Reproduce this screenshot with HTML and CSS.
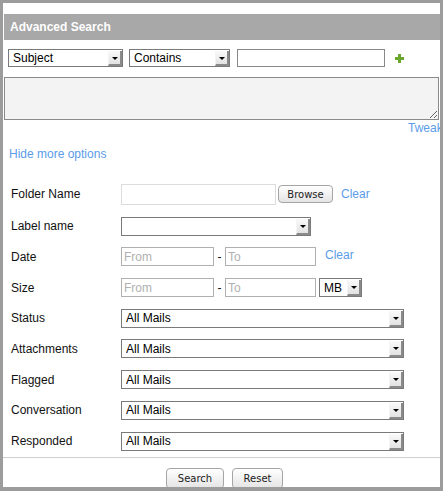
FILE: index.html
```html
<!DOCTYPE html>
<html lang="en">
<head>
    <meta charset="UTF-8">
    <meta name="viewport" content="width=device-width, initial-scale=1.0">
    <title>Advanced Search</title>
    <link rel="stylesheet" href="styles.css">
</head>
<body>
    <div class="panel">
        <div class="title">Advanced Search</div>

        <!-- Query row -->
        <div class="query">
            <span class="sel sel-field">
                <select><option>Subject</option></select>
                <span class="arrow"></span>
            </span>
            <span class="sel sel-op">
                <select><option>Contains</option></select>
                <span class="arrow"></span>
            </span>
            <input type="text" class="query-text">
            <svg class="plus" width="9" height="9" viewBox="0 0 9 9">
                <rect x="3" y="0" width="3" height="9" fill="#6aa72e"/>
                <rect x="0" y="3" width="9" height="3" fill="#6aa72e"/>
            </svg>
        </div>

        <textarea class="query-box"></textarea>
        <div class="tweak"><a href="#">Tweak</a></div>
        <div class="more"><a href="#">Hide more options</a></div>

        <!-- More options -->
        <div class="options">
            <label>Folder Name</label>
            <div class="ctrl">
                <input type="text" class="folder">
                <button class="btn btn-browse">Browse</button>
                <a href="#" class="clear">Clear</a>
            </div>

            <label>Label name</label>
            <div class="ctrl">
                <span class="sel sel-label">
                    <select><option></option></select>
                    <span class="arrow"></span>
                </span>
            </div>

            <label>Date</label>
            <div class="ctrl">
                <input type="text" class="range" placeholder="From">
                <span class="dash">-</span>
                <input type="text" class="range range-to" placeholder="To">
                <a href="#" class="clear clear-date">Clear</a>
            </div>

            <label>Size</label>
            <div class="ctrl">
                <input type="text" class="range" placeholder="From">
                <span class="dash">-</span>
                <input type="text" class="range range-to" placeholder="To">
                <span class="sel sel-unit">
                    <select><option>MB</option></select>
                    <span class="arrow"></span>
                </span>
            </div>

            <label>Status</label>
            <div class="ctrl">
                <span class="sel sel-wide"><select><option>All Mails</option></select><span class="arrow"></span></span>
            </div>

            <label>Attachments</label>
            <div class="ctrl">
                <span class="sel sel-wide"><select><option>All Mails</option></select><span class="arrow"></span></span>
            </div>

            <label>Flagged</label>
            <div class="ctrl">
                <span class="sel sel-wide"><select><option>All Mails</option></select><span class="arrow"></span></span>
            </div>

            <label>Conversation</label>
            <div class="ctrl">
                <span class="sel sel-wide"><select><option>All Mails</option></select><span class="arrow"></span></span>
            </div>

            <label>Responded</label>
            <div class="ctrl">
                <span class="sel sel-wide"><select><option>All Mails</option></select><span class="arrow"></span></span>
            </div>
        </div>

        <div class="actions">
            <button class="btn btn-search">Search</button>
            <button class="btn btn-reset">Reset</button>
        </div>
    </div>
</body>
</html>
```

FILE: styles.css
```css
* {
    box-sizing: border-box;
}

body {
    margin: 0;
    background: #9c9c9c;
    font-family: "Liberation Sans", Arial, sans-serif;
    font-size: 12px;
    color: #111;
}

a {
    color: #5b9ce8;
    text-decoration: none;
}

.panel {
    margin: 3px;
    height: 484px;
    background: #fff;
    overflow: hidden;
    padding-top: 11px;
}

.title {
    margin-left: 1px;
    height: 26px;
    line-height: 26px;
    padding-left: 6px;
    background: #a8a8a8;
    color: #fff;
    font-weight: bold;
    font-size: 12px;
}

/* Query row */
.query {
    display: flex;
    align-items: center;
    margin-top: 9px;
    padding-left: 5px;
    height: 18px;
}

.sel {
    position: relative;
    display: inline-block;
    height: 19px;
}

.sel select {
    appearance: none;
    -webkit-appearance: none;
    display: block;
    width: 100%;
    height: 100%;
    margin: 0;
    padding: 0 0 0 4px;
    border: 1px solid #7a7a7a;
    border-radius: 0;
    background: #fff;
    color: #000;
    font-family: "Liberation Sans", Arial, sans-serif;
    font-size: 12px;
}

.sel .arrow {
    position: absolute;
    right: 1px;
    top: 2px;
    bottom: 1px;
    width: 14px;
    background: linear-gradient(#fafafa, #e2e2e2);
    border-left: 1px solid #f4f4f4;
    border-right: 2px solid #8a8a8a;
    border-bottom: 2px solid #8a8a8a;
}

.sel .arrow::after {
    content: "";
    position: absolute;
    left: 3px;
    top: 6px;
    border-left: 3px solid transparent;
    border-right: 3px solid transparent;
    border-top: 3px solid #000;
}

.sel-field { width: 115px; height: 18px; }
.sel-op { width: 101px; height: 18px; margin-left: 6px; }
.sel-label { width: 190px; }
.sel-unit { width: 43px; margin-left: 3px; }
.sel-wide { width: 283px; }

.query-text {
    width: 148px;
    height: 18px;
    margin: 0 0 0 7px;
    border: 1px solid #888;
    padding: 0 3px;
}

.plus {
    margin-left: 10px;
}

.query-box {
    display: block;
    width: 435px;
    height: 43px;
    margin: 10px 1px 0 1px;
    border: 1px solid #8a8a8a;
    background: #f3f3f3;
    font-family: "Liberation Sans", Arial, sans-serif;
}

.tweak {
    margin-top: 1px;
    line-height: 14px;
    padding-left: 405px;
    white-space: nowrap;
}

.more {
    margin-top: 12px;
    line-height: 14px;
    padding-left: 6px;
}

/* More options */
.options {
    display: grid;
    grid-template-columns: 110px auto;
    grid-template-rows: 22px;
    grid-auto-rows: 19px;
    row-gap: 11.7px;
    align-items: center;
    margin-top: 22px;
    padding-left: 8px;
}

.options label {
    color: #111;
}

.ctrl {
    display: flex;
    align-items: center;
    height: 100%;
}

.folder {
    width: 155px;
    height: 21px;
    margin: 0;
    border: 1px solid #dcdcdc;
}

input {
    font-family: "Liberation Sans", Arial, sans-serif;
    font-size: 12px;
    outline: none;
}

.range {
    width: 93px;
    height: 19px;
    margin: 0;
    padding: 0 2px;
    border: 1px solid #b0b0b0;
}

.range::placeholder {
    color: #b0b0b0;
}

.range-to {
    width: 91px;
}

.dash {
    width: 11px;
    text-align: center;
}

.clear {
    margin-left: 8px;
    line-height: 14px;
}

.clear-date {
    margin-left: 9px;
    margin-top: -3px;
}

.btn {
    height: 21px;
    padding: 0;
    border: 1px solid #a5a5a5;
    border-radius: 4px;
    background: linear-gradient(#ffffff, #e4e4e4);
    color: #222;
    font-family: "DejaVu Sans", Verdana, sans-serif;
    font-size: 10px;
    cursor: pointer;
}

.btn-browse {
    width: 55px;
    height: 18px;
    margin-left: 2px;
}

.actions {
    display: flex;
    justify-content: center;
    gap: 8px;
    margin-top: 6px;
    padding-top: 10px;
    padding-left: 6px;
    border-top: 1px solid #cfcfcf;
}

.btn-search { width: 58px; }
.btn-reset { width: 51px; }
```
